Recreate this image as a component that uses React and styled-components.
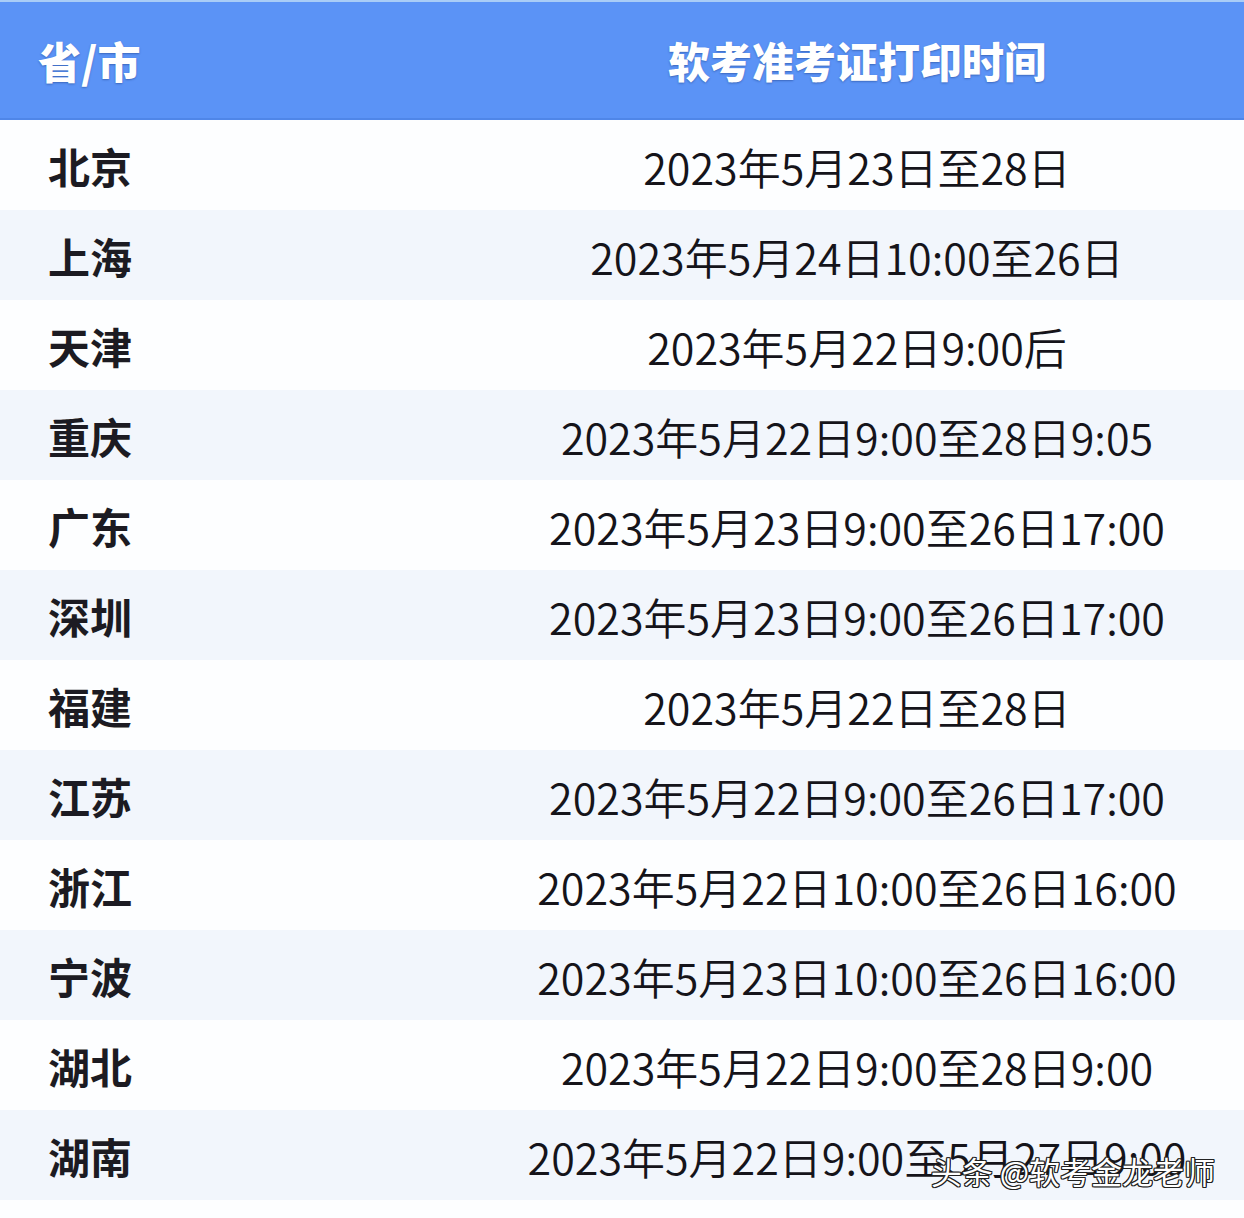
import React from "react";
import styled, { createGlobalStyle } from "styled-components";

const Global = createGlobalStyle`
  html, body { margin: 0; padding: 0; background: #ffffff; }
  body { font-family: "Noto Sans CJK SC", "Noto Sans", sans-serif; }
`;

const Page = styled.div`
  position: relative;
  width: 1244px;
  height: 1218px;
  background: #fdfeff;
  border-top: 2px solid #a9cdf7;
  box-sizing: border-box;
  overflow: hidden;
`;

const Table = styled.div`
  display: grid;
  grid-template-columns: 470px 1fr;
`;

const HeadCell = styled.div`
  height: 118px;
  background: #5b93f6;
  border-bottom: 2px solid #4f86e8;
  display: flex;
  align-items: center;
  justify-content: ${(p) => (p.$center ? "center" : "flex-start")};
  padding-left: ${(p) => (p.$center ? "0" : "38px")};
  padding-bottom: 0;
  box-sizing: border-box;
  color: #ffffff;
  font-family: "Noto Sans CJK SC", sans-serif;
  font-weight: 900;
  font-size: ${(p) => (p.$center ? "42px" : "43px")};
  line-height: 1;
  text-shadow: 0 1px 2px rgba(20, 50, 120, 0.45);
`;

const Cell = styled.div`
  height: 90px;
  background: ${(p) => (p.$alt ? "#f2f6fc" : "#fdfeff")};
  display: flex;
  align-items: center;
  justify-content: ${(p) => (p.$center ? "center" : "flex-start")};
  padding-left: ${(p) => (p.$center ? "0" : "48px")};
  padding-top: 2px;
  box-sizing: border-box;
  color: #1c1b22;
`;

const Province = styled.span`
  font-family: "Noto Sans CJK SC", sans-serif;
  font-weight: 700;
  font-size: 42px;
  line-height: 1;
`;

const DateText = styled.span`
  font-family: "Noto Sans CJK SC", sans-serif;
  font-weight: 350;
  font-size: 43px;
  line-height: 1;
  color: #15141a;
`;

const Watermark = styled.div`
  position: absolute;
  right: 29px;
  top: 1146px;
  font-family: "Noto Sans CJK SC", sans-serif;
  font-size: 31px;
  font-weight: 400;
  color: #ffffff;
  white-space: pre;
  text-shadow:
    -1px -1px 0 #222, 1px -1px 0 #222, -1px 1px 0 #222, 1px 1px 0 #222,
    0 -1px 0 #222, 0 1px 0 #222, -1px 0 0 #222, 1px 0 0 #222;
`;

const rows = [
  ["北京", "2023年5月23日至28日"],
  ["上海", "2023年5月24日10:00至26日"],
  ["天津", "2023年5月22日9:00后"],
  ["重庆", "2023年5月22日9:00至28日9:05"],
  ["广东", "2023年5月23日9:00至26日17:00"],
  ["深圳", "2023年5月23日9:00至26日17:00"],
  ["福建", "2023年5月22日至28日"],
  ["江苏", "2023年5月22日9:00至26日17:00"],
  ["浙江", "2023年5月22日10:00至26日16:00"],
  ["宁波", "2023年5月23日10:00至26日16:00"],
  ["湖北", "2023年5月22日9:00至28日9:00"],
  ["湖南", "2023年5月22日9:00至5月27日9:00"],
];

export default function App() {
  return (
    <Page>
      <Global />
      <Table>
        <HeadCell>省/市</HeadCell>
        <HeadCell $center>软考准考证打印时间</HeadCell>
        {rows.map(([p, d], i) => (
          <React.Fragment key={p}>
            <Cell $alt={i % 2 === 1}>
              <Province>{p}</Province>
            </Cell>
            <Cell $alt={i % 2 === 1} $center>
              <DateText>{d}</DateText>
            </Cell>
          </React.Fragment>
        ))}
      </Table>
      <Watermark>头条 @软考金龙老师</Watermark>
    </Page>
  );
}
